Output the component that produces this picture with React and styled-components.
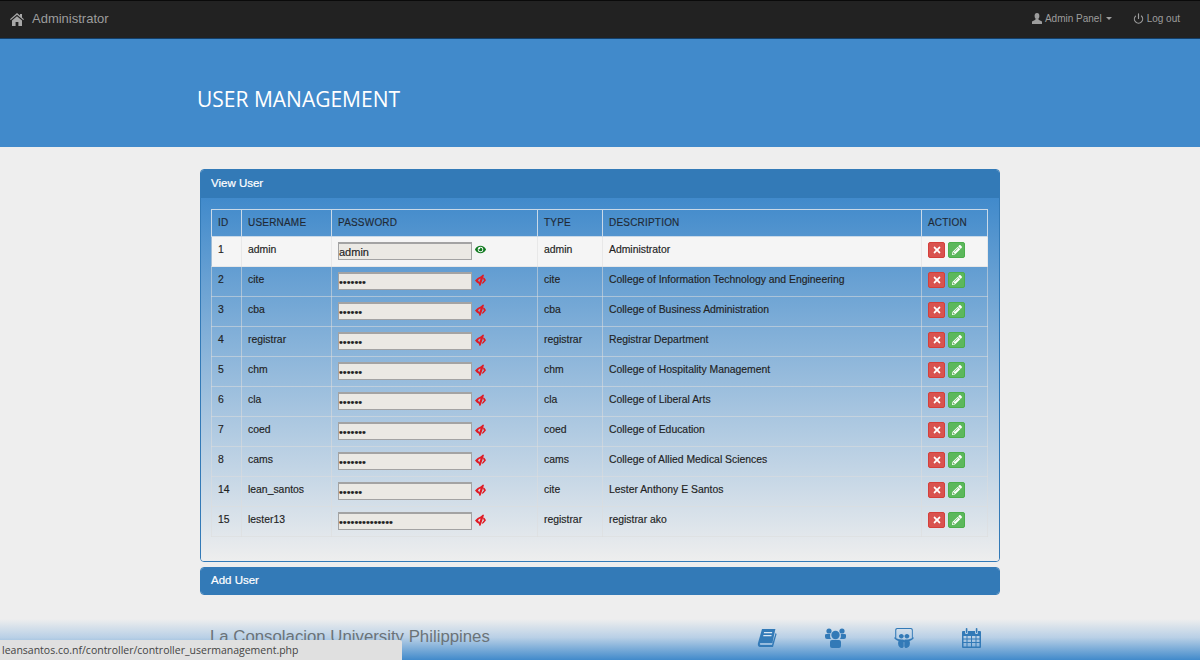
import React from "react";
import styled, { createGlobalStyle } from "styled-components";
import { FaEye, FaTimes, FaPencilAlt, FaSlideshare } from "react-icons/fa";
import { Power } from "lucide-react";

const GlobalStyle = createGlobalStyle`
  html, body {
    margin: 0;
    height: 660px;
    overflow: hidden;
    background: #eeeeee;
    font-family: "Liberation Sans", Arial, sans-serif;
  }
  * { box-sizing: border-box; }
`;

const Page = styled.div`
  width: 1200px;
  height: 660px;
  display: flex;
  flex-direction: column;
  overflow: hidden;
`;

const Navbar = styled.nav`
  height: 39px;
  flex: none;
  display: flex;
  align-items: center;
  justify-content: space-between;
  padding: 0 20px 3px 10px;
  background: #222222;
  border-top: 1px solid #0a0a0a;
  border-bottom: 1px solid #123f6b;
  color: #9d9d9d;
`;

const Brand = styled.div`
  display: flex;
  align-items: center;
  gap: 8px;
  font-size: 13px;

  svg {
    color: #a8a8a8;
    margin-top: 2px;
  }
`;

const NavLinks = styled.div`
  display: flex;
  align-items: center;
  gap: 21px;
`;

const NavLink = styled.div`
  display: flex;
  align-items: center;
  gap: 3px;
  font-size: 10px;
`;

const Caret = styled.span`
  width: 0;
  height: 0;
  margin-left: 1px;
  margin-top: 1px;
  border-top: 3px solid #9d9d9d;
  border-left: 3px solid transparent;
  border-right: 3px solid transparent;
`;

const Jumbotron = styled.header`
  height: 108px;
  flex: none;
  display: flex;
  align-items: center;
  padding: 12px 0 0 197px;
  background: #418acb;
`;

const Title = styled.h1`
  margin: 0;
  font-family: "Open Sans", sans-serif;
  font-size: 21px;
  font-weight: 400;
  color: #ffffff;
`;

const Main = styled.main`
  flex: none;
  width: 800px;
  margin: 22px 0 0 200px;
  display: flex;
  flex-direction: column;
  gap: 5px;
`;

const Panel = styled.section`
  border: 1px solid #337ab7;
  border-radius: 4px;
  overflow: hidden;
`;

const PanelHeading = styled.div`
  height: ${(p) => p.$height}px;
  display: flex;
  align-items: center;
  padding: 0 10px 3px;
  background: #337ab7;
  color: #ffffff;
  font-size: 11.5px;
  -webkit-text-stroke: 0.2px #ffffff;
`;

const PanelBody = styled.div`
  padding: 11px 11px 24px 10px;
  background: linear-gradient(to bottom, #418acb 0%, #eeeeee 100%);
`;

const Table = styled.table`
  width: 776px;
  table-layout: fixed;
  border-collapse: collapse;
  font-size: 10.4px;
  color: #222222;
  -webkit-text-stroke: 0.15px #222222;
`;

const HeadCell = styled.th`
  width: ${(p) => p.$width}px;
  height: 27px;
  padding: 0 6px 2px;
  border: 1px solid #c9d9e8;
  text-align: left;
  font-size: 10px;
  font-weight: 400;
  letter-spacing: 0.2px;
  color: #1f2d3d;
`;

const Row = styled.tr`
  height: 30px;
  background: ${(p) => (p.$active ? "#f5f5f5" : "transparent")};
`;

const Cell = styled.td`
  padding: 7px 6px 0;
  border: 1px solid rgba(221, 221, 221, 0.55);
  vertical-align: top;
  white-space: nowrap;
`;

const PasswordWrap = styled.div`
  display: flex;
  align-items: center;
  gap: 3px;
  margin-top: -2px;
`;

const PasswordInput = styled.input`
  width: 134px;
  height: 18px;
  padding: 1px 0 0;
  background: #ebe9e4;
  border: 1px solid #a3a3a3;
  border-top-width: 2px;
  font-family: "Liberation Sans", Arial, sans-serif;
  font-size: 11px;
  color: #222222;
  outline: none;
`;

const EyeToggle = styled.span`
  display: flex;
  margin-top: -3px;
  font-size: 11px;
  color: ${(p) => (p.$visible ? "#0f7a1e" : "#e01b24")};
`;

const Actions = styled.div`
  display: flex;
  gap: 3px;
  margin-top: -2px;
`;

const IconButton = styled.button`
  width: 17px;
  height: 16px;
  padding: 0;
  display: flex;
  align-items: center;
  justify-content: center;
  border-radius: 2px;
  border: 1px solid ${(p) => (p.$danger ? "#d43f3a" : "#4cae4c")};
  background: ${(p) => (p.$danger ? "#d9534f" : "#5cb85c")};
  color: #ffffff;
  font-size: 10px;
`;

const Footer = styled.footer`
  flex: 1;
  margin-top: 24px;
  display: flex;
  align-items: flex-start;
  padding: 9px 219px 0 210px;
  background: linear-gradient(to bottom, #eeeeee 0%, #b9d0e6 45%, #418acb 100%);
`;

const FooterTitle = styled.div`
  flex: 1;
  font-size: 16.8px;
  line-height: 18px;
  color: #6b7378;
`;

const FooterIcons = styled.div`
  display: flex;
  align-items: center;
  gap: 48px;
  color: #337ab7;

  svg {
    display: block;
  }
`;

const StatusBar = styled.div`
  position: fixed;
  left: 0;
  bottom: 0;
  width: 402px;
  height: 20px;
  display: flex;
  align-items: center;
  padding-left: 2px;
  background: #e0e0e0;
  border-top-right-radius: 2px;
  font-family: "Open Sans", sans-serif;
  font-size: 10.5px;
  color: #444444;
`;

const HomeIcon = () => (
  <svg width="14" height="13" viewBox="0 0 14 13" fill="currentColor">
    <path d="M7 0 L10 2.6 V1 H12 V4.4 L14 6.2 L13.2 7 L7 1.8 L0.8 7 L0 6.2 Z" />
    <path d="M2 7.4 L7 3.2 L12 7.4 V13 H8.4 V9 H5.6 V13 H2 Z" />
  </svg>
);

const UserIcon = () => (
  <svg width="10" height="11" viewBox="0 0 10 11" fill="currentColor">
    <ellipse cx="5" cy="3" rx="2.4" ry="3" />
    <path d="M3.6 5.6 H6.4 L6.6 6.8 L10 8.4 V11 H0 V8.4 L3.4 6.8 Z" />
  </svg>
);

const EyeCloseIcon = () => (
  <svg width="11" height="12" viewBox="0 0 11 12" fill="currentColor">
    <path
      fillRule="evenodd"
      d="M0 6.5 Q2.5 3.4 5.6 2.6 L8 0.4 L9 1 L5.6 11.6 L4.6 12 L3.8 9.8 Q1.6 8.8 0 6.5 Z M3 6.4 L4.4 8.2 L5.6 4.6 Q3.8 4.8 3 6.4 Z"
    />
    <path d="M8.6 3.2 Q10 4.4 11 6.2 Q9.2 9 6.8 10 L7.4 8.2 Q8.4 7.4 9 6.2 Q8.6 5.4 8 5 Z" />
  </svg>
);

const BookIcon = () => (
  <svg width="20" height="20" viewBox="0 0 20 20" fill="currentColor">
    <path d="M5 1 H18.4 L15.4 15 H3.8 C2.6 15 2.4 17 3.6 17 H15 L18.6 5 L19.6 6 L16 19 H3 C0.8 19 0.6 16.4 1 15 Z" />
    <path d="M7 4 H15.2 L15 5.2 H6.8 Z M6.4 7 H14.6 L14.4 8.2 H6.2 Z" fill="#dbe7f3" />
  </svg>
);

const PeopleIcon = () => (
  <svg width="21" height="20" viewBox="0 0 21 20" fill="currentColor">
    <circle cx="4" cy="3" r="2.6" />
    <circle cx="17" cy="3" r="2.6" />
    <circle cx="10.5" cy="7" r="4.2" />
    <path d="M0 7 Q0 6 1.5 6 H5.2 Q4.6 9 6 11 H2 Q0 11 0 9 Z" />
    <path d="M21 7 Q21 6 19.5 6 H15.8 Q16.4 9 15 11 H19 Q21 11 21 9 Z" />
    <path d="M5 14 Q5 12 7 12 H14 Q16 12 16 14 V18 Q16 20 14 20 H7 Q5 20 5 18 Z" />
  </svg>
);

const CalendarIcon = () => (
  <svg width="19" height="20" viewBox="0 0 19 20" fill="currentColor">
    <path
      fillRule="evenodd"
      d="M0 4 Q0 3 1 3 H3 V5 Q3 6 4.5 6 Q6 6 6 5 V3 H13 V5 Q13 6 14.5 6 Q16 6 16 5 V3 H18 Q19 3 19 4 V19 Q19 20 18 20 H1 Q0 20 0 19 Z M1.5 8 V10.5 H4.5 V8 Z M5.5 8 V10.5 H9 V8 Z M10 8 V10.5 H13.5 V8 Z M14.5 8 V10.5 H17.5 V8 Z M1.5 11.5 V14 H4.5 V11.5 Z M5.5 11.5 V14 H9 V11.5 Z M10 11.5 V14 H13.5 V11.5 Z M14.5 11.5 V14 H17.5 V11.5 Z M1.5 15 V18.5 H4.5 V15 Z M5.5 15 V18.5 H9 V15 Z M10 15 V18.5 H13.5 V15 Z M14.5 15 V18.5 H17.5 V15 Z"
    />
    <rect x="3.8" y="0" width="1.6" height="5" rx="0.8" />
    <rect x="13.8" y="0" width="1.6" height="5" rx="0.8" />
  </svg>
);

const columns = [
  { label: "ID", width: 30 },
  { label: "USERNAME", width: 90 },
  { label: "PASSWORD", width: 206 },
  { label: "TYPE", width: 65 },
  { label: "DESCRIPTION", width: 319 },
  { label: "ACTION", width: 66 },
];

const users = [
  { id: 1, name: "admin", password: "admin", type: "admin", description: "Administrator", visible: true },
  { id: 2, name: "cite", password: "1234567", type: "cite", description: "College of Information Technology and Engineering" },
  { id: 3, name: "cba", password: "123456", type: "cba", description: "College of Business Administration" },
  { id: 4, name: "registrar", password: "123456", type: "registrar", description: "Registrar Department" },
  { id: 5, name: "chm", password: "123456", type: "chm", description: "College of Hospitality Management" },
  { id: 6, name: "cla", password: "123456", type: "cla", description: "College of Liberal Arts" },
  { id: 7, name: "coed", password: "1234567", type: "coed", description: "College of Education" },
  { id: 8, name: "cams", password: "1234567", type: "cams", description: "College of Allied Medical Sciences" },
  { id: 14, name: "lean_santos", password: "123456", type: "cite", description: "Lester Anthony E Santos" },
  { id: 15, name: "lester13", password: "12345678901234", type: "registrar", description: "registrar ako" },
];

export default function App() {
  return (
    <Page>
      <GlobalStyle />
      <Navbar>
        <Brand>
          <HomeIcon />
          Administrator
        </Brand>
        <NavLinks>
          <NavLink>
            <UserIcon />
            Admin Panel
            <Caret />
          </NavLink>
          <NavLink>
            <Power size={11} strokeWidth={2.5} />
            Log out
          </NavLink>
        </NavLinks>
      </Navbar>
      <Jumbotron>
        <Title>USER MANAGEMENT</Title>
      </Jumbotron>
      <Main>
        <Panel>
          <PanelHeading $height={28}>View User</PanelHeading>
          <PanelBody>
            <Table>
              <thead>
                <tr>
                  {columns.map((col) => (
                    <HeadCell key={col.label} $width={col.width}>
                      {col.label}
                    </HeadCell>
                  ))}
                </tr>
              </thead>
              <tbody>
                {users.map((user) => (
                  <Row key={user.id} $active={user.visible}>
                    <Cell>{user.id}</Cell>
                    <Cell>{user.name}</Cell>
                    <Cell>
                      <PasswordWrap>
                        <PasswordInput
                          readOnly
                          type={user.visible ? "text" : "password"}
                          value={user.password}
                        />
                        <EyeToggle $visible={user.visible}>
                          {user.visible ? <FaEye /> : <EyeCloseIcon />}
                        </EyeToggle>
                      </PasswordWrap>
                    </Cell>
                    <Cell>{user.type}</Cell>
                    <Cell>{user.description}</Cell>
                    <Cell>
                      <Actions>
                        <IconButton $danger>
                          <FaTimes />
                        </IconButton>
                        <IconButton>
                          <FaPencilAlt />
                        </IconButton>
                      </Actions>
                    </Cell>
                  </Row>
                ))}
              </tbody>
            </Table>
          </PanelBody>
        </Panel>
        <Panel>
          <PanelHeading $height={26}>Add User</PanelHeading>
        </Panel>
      </Main>
      <Footer>
        <FooterTitle>La Consolacion University Philippines</FooterTitle>
        <FooterIcons>
          <BookIcon />
          <PeopleIcon />
          <FaSlideshare size={20} />
          <CalendarIcon />
        </FooterIcons>
      </Footer>
      <StatusBar>leansantos.co.nf/controller/controller_usermanagement.php</StatusBar>
    </Page>
  );
}
